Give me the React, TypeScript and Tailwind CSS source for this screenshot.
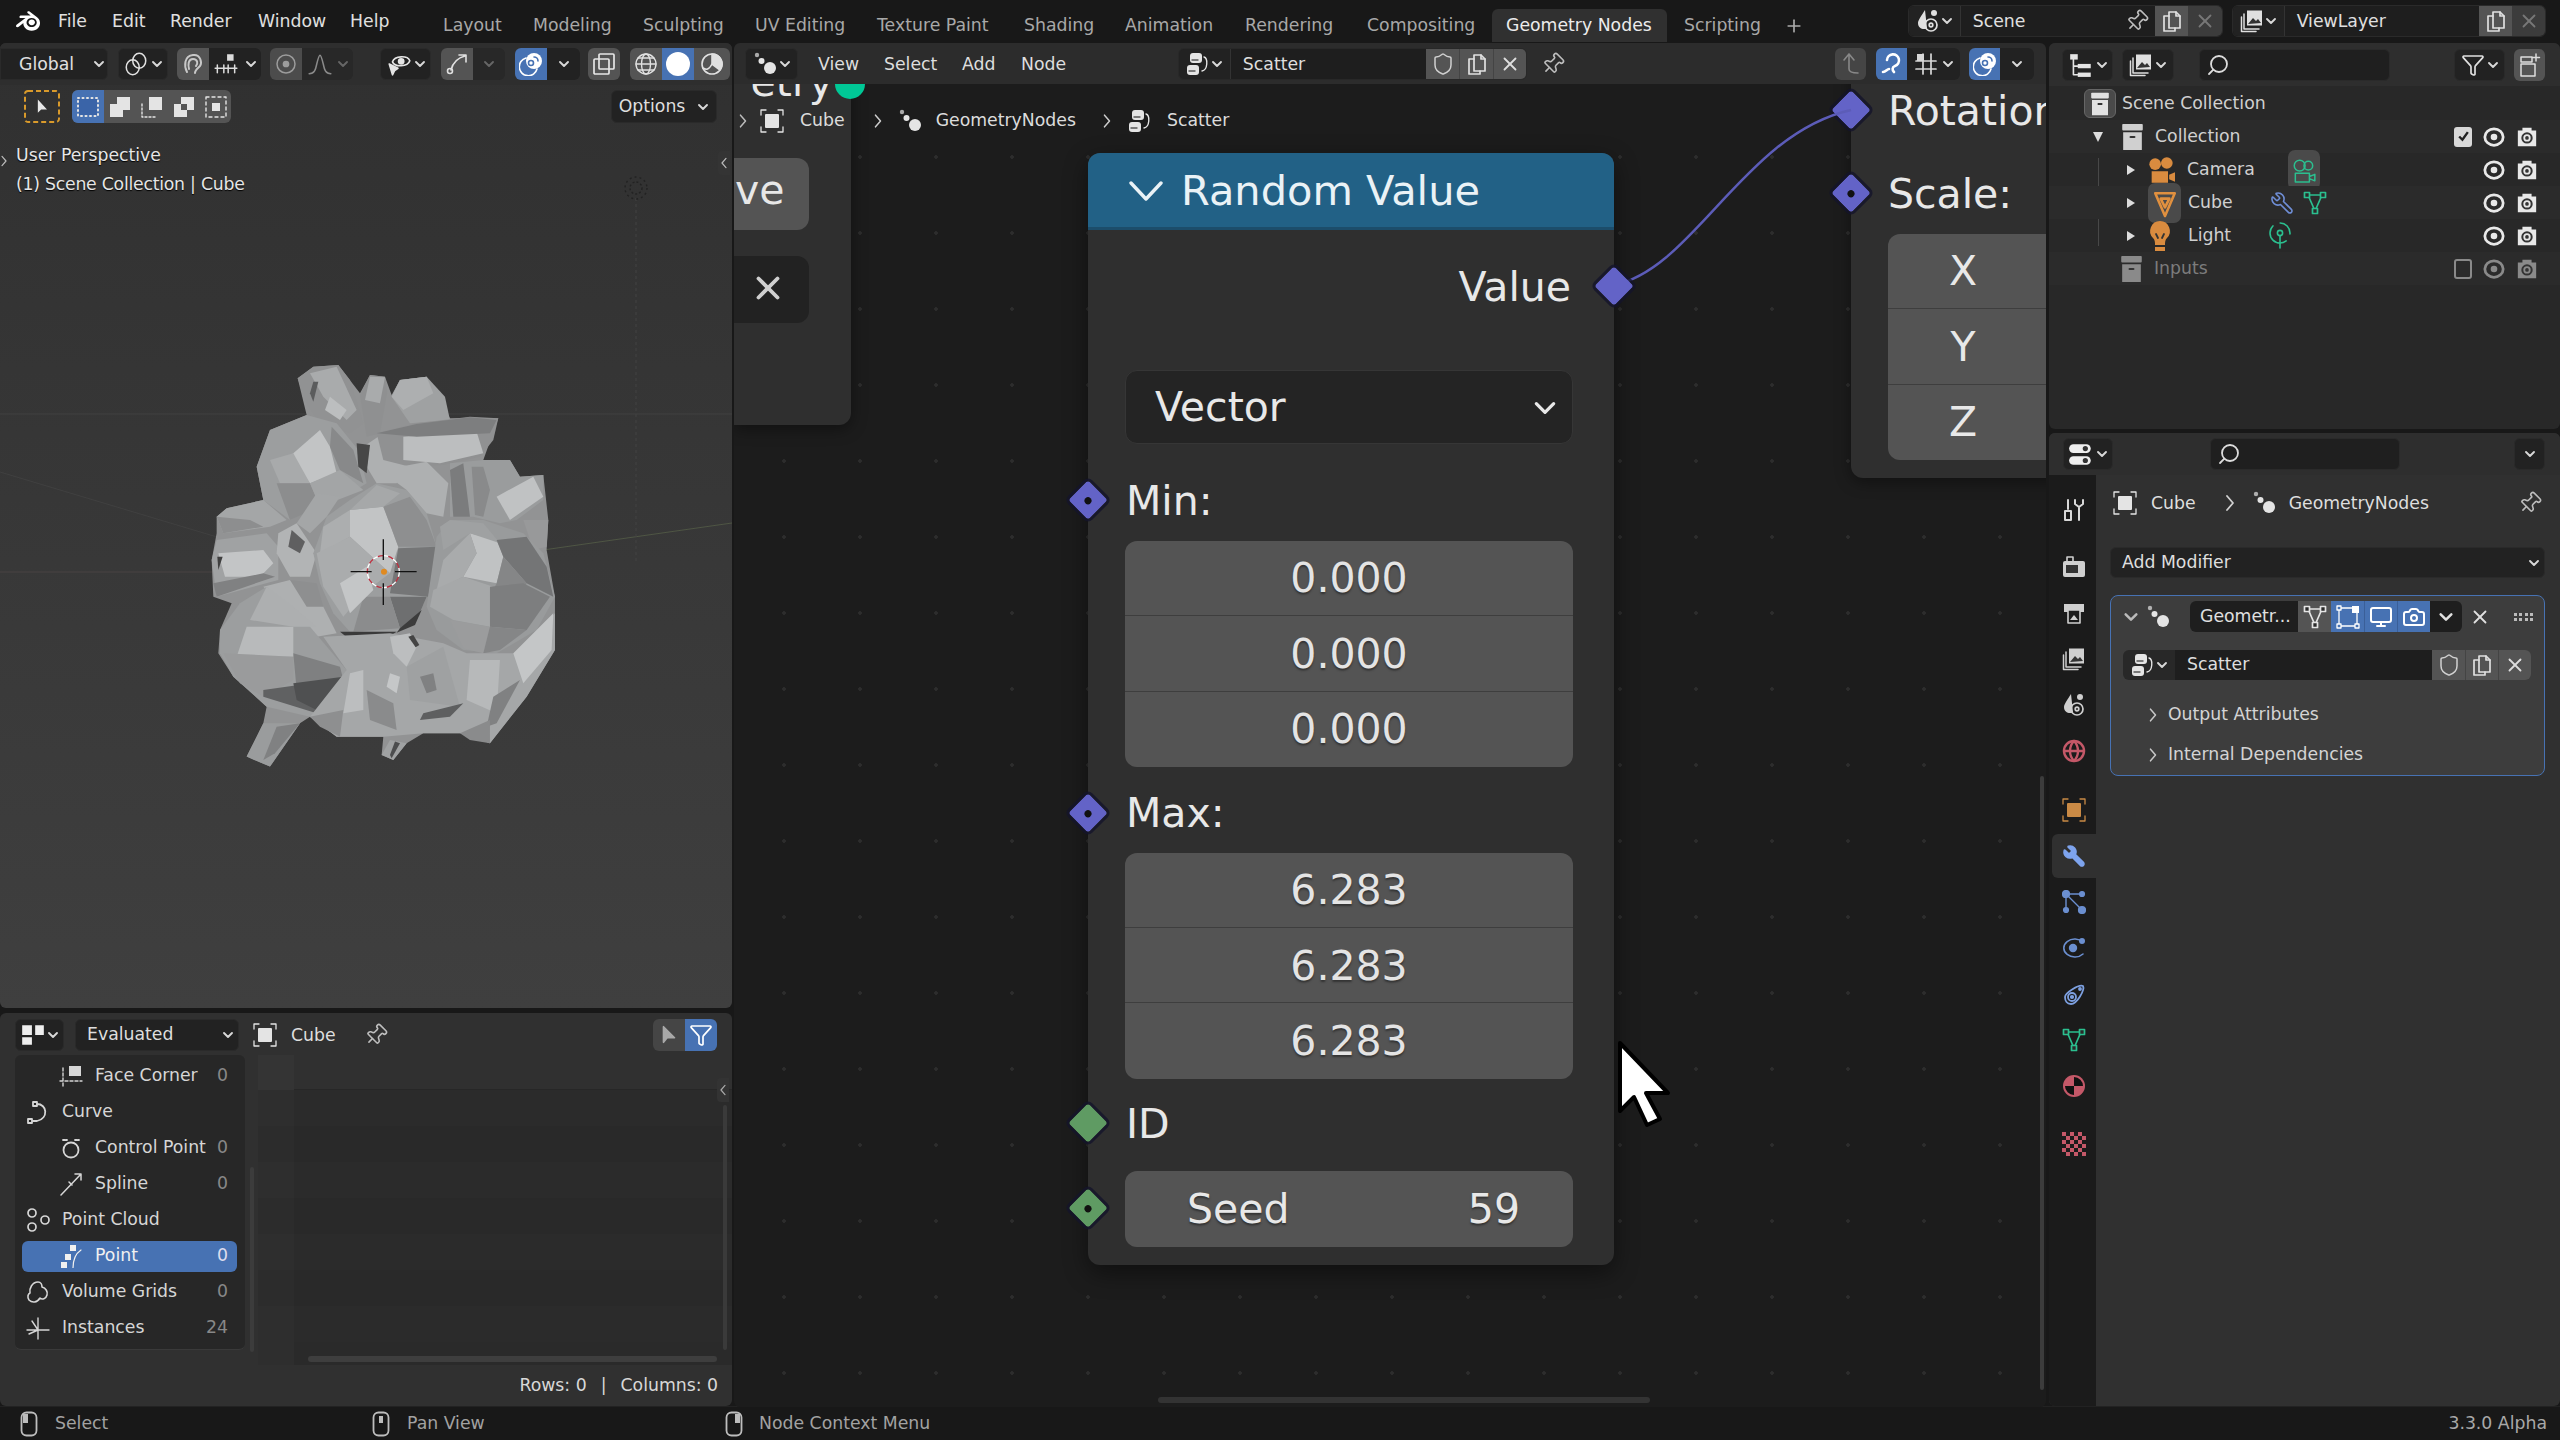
import React from 'react';
import { Pin, Shield, X, Search, Filter, Wrench, Monitor, Camera, Globe, Plus } from 'lucide-react';
import { SiBlender } from 'react-icons/si';

type P = { c?: string; children?: React.ReactNode; v?: string; sw?: number };
const S = ({ c = 'w-[24px] h-[24px]', children, v = '0 0 24 24', sw = 1.8 }: P) => (
  <svg viewBox={v} className={c + ' shrink-0'} fill="none" stroke="currentColor" strokeWidth={sw} strokeLinecap="round" strokeLinejoin="round">{children}</svg>
);
const Chev = ({ c = 'text-[#d8d8d8]' }: { c?: string }) => (
  <svg viewBox="0 0 12 12" className={'w-[12px] h-[12px] shrink-0 ' + c} fill="none" stroke="currentColor" strokeWidth={1.9} strokeLinecap="round" strokeLinejoin="round"><path d="M2 4l4 4 4-4" /></svg>
);
const RightChev = ({ c = 'w-[12px] h-[18px] text-[#c8c8c8]' }: { c?: string }) => (
  <svg viewBox="0 0 12 18" className={c + ' shrink-0'} fill="none" stroke="currentColor" strokeWidth={1.8} strokeLinecap="round" strokeLinejoin="round"><path d="M3 2l6 7-6 7" /></svg>
);
const NodesIc = ({ c = 'w-[24px] h-[24px] text-[#e4e4e4]' }: { c?: string }) => (
  <S c={c}><g fill="currentColor" stroke="none"><circle cx="4" cy="3" r="2.2" opacity=".7" /><circle cx="8.5" cy="9" r="3" /><circle cx="17" cy="16" r="6" /></g></S>
);
const CubeIc = ({ c = 'w-[24px] h-[24px] text-[#e4e4e4]', f = 'currentColor' }: { c?: string; f?: string }) => (
  <S c={c} sw={1.3}><rect x="5" y="5" width="14" height="14" rx="1" fill={f} stroke="none" /><path d="M1 6V1h5M18 1h5v5M23 18v5h-5M6 23H1v-5" /></S>
);
const TreeIc = ({ c = 'w-[24px] h-[24px] text-[#e4e4e4]' }: { c?: string }) => (
  <S c={c} sw={1.4}><rect x="4" y="1" width="12" height="10" rx="3" fill="currentColor" stroke="none" /><rect x="1" y="13" width="12" height="10" rx="3" fill="currentColor" stroke="none" /><path d="M18 5c4 1 4 13-2 14" /><path d="M6 8h6M3 19h6" stroke="#555" /></S>
);
const PinIc = ({ c = 'w-[24px] h-[24px] text-[#bdbdbd]' }: { c?: string }) => <Pin className={c + ' rotate-45 shrink-0'} strokeWidth={1.6} />;
const CopyIc = ({ c = 'w-[24px] h-[24px] text-[#e0e0e0]' }: { c?: string }) => (
  <S c={c} sw={1.7}><path d="M9 3h7l4 4v12H9z" /><path d="M16 3v4h4" /><path d="M9 7H4v15h11v-3" /></S>
);
const ShieldIc = ({ c = 'w-[24px] h-[24px] text-[#d0d0d0]' }: { c?: string }) => <Shield className={c + ' shrink-0'} strokeWidth={1.5} />;
const XIc = ({ c = 'w-[22px] h-[22px] text-[#dedede]' }: { c?: string }) => <X className={c + ' shrink-0'} strokeWidth={2} />;
const CollectionIc = ({ c = 'w-[24px] h-[30px] text-[#e2e2e2]' }: { c?: string }) => (
  <S c={c} v="0 0 24 30"><g fill="currentColor" stroke="none"><rect x="1" y="1" width="22" height="7" rx="1" /><path d="M2 10h20v19H2z" /></g><path d="M10 15h4" stroke="#333" strokeWidth="2.4" /></S>
);
const EyeIc = ({ c = 'text-[#e8e8e8]' }: { c?: string }) => (
  <svg viewBox="0 0 24 24" className={'w-[22px] h-[22px] shrink-0 ' + c}><ellipse cx="12" cy="12" rx="10" ry="9" fill="none" stroke="currentColor" strokeWidth="3" /><circle cx="12" cy="12" r="3.6" fill="currentColor" /></svg>
);
const CamIc = ({ c = 'text-[#e8e8e8]' }: { c?: string }) => (
  <svg viewBox="0 0 24 24" className={'w-[22px] h-[24px] shrink-0 ' + c}><path d="M7 2h10v3h5v17H2V5h5z" fill="currentColor" /><circle cx="12" cy="13" r="6.2" fill="#333" /><circle cx="12" cy="13" r="4" fill="currentColor" /><circle cx="12" cy="13" r="2" fill="#333" /></svg>
);
const MeshIc = ({ c = 'w-[24px] h-[24px] text-[#2bbf8f]' }: { c?: string }) => (
  <S c={c} sw={1.7}><path d="M5 4h14L12 20z" /><rect x="1.5" y="1.5" width="5" height="5" fill="#2a2a2a" /><rect x="17.5" y="1.5" width="5" height="5" fill="#2a2a2a" /><rect x="9.5" y="17.5" width="5" height="5" fill="#2a2a2a" /></S>
);
const ImgStack = ({ c = 'w-[24px] h-[24px] text-[#e0e0e0]' }: { c?: string }) => (
  <S c={c} sw={1.5}><rect x="7" y="1.5" width="15" height="15" fill="currentColor" stroke="none" /><path d="M8 15l5-6 3 3 2-2 3 4z" fill="#333" stroke="none" /><path d="M4 5v15h15M1.5 8v14.5H16" /></S>
);
const SceneIc = ({ c = 'w-[24px] h-[24px] text-[#e0e0e0]' }: { c?: string }) => (
  <S c={c} sw={1.7}><path d="M9 1C6 6 2 11 2 14c0 4 3 6 6 6 1 0 2 0 3-1L9 1z" fill="currentColor" stroke="none" /><circle cx="15" cy="16" r="6" /><circle cx="15" cy="16" r="1.8" /><circle cx="18" cy="4" r="3" fill="currentColor" stroke="none" /></S>
);
const Overlay = ({ c = 'w-[24px] h-[24px] text-white' }: { c?: string }) => (
  <S c={c} sw={1.6}><circle cx="15" cy="9" r="8" fill="currentColor" stroke="none" /><path d="M7 6a9 9 0 1 0 11 11" /><circle cx="12" cy="11" r="2.5" stroke="#4772b3" /><path d="M15 5a4 4 0 0 1 4 4" stroke="#4772b3" /></S>
);
const Dark = ({ c = '', children }: { c?: string; children?: React.ReactNode }) => (
  <div className={'h-[32px] flex items-center justify-center bg-[#222222] border border-[#2a2a2a] rounded-[6px] ' + c}>{children}</div>
);

const FACES: [string, string][] = [
  ['443,175 490,140 565,135 630,220 660,165 705,170 725,225 750,180 830,170 900,295 1045,295 1000,420 1080,420 1110,470 1180,465 1195,600 1190,690 1215,830 1215,990 1130,1130 1020,1270 940,1240 820,1240 770,1270 730,1320 695,1305 700,1250 560,1250 480,1190 450,1210 360,1340 290,1310 340,1210 350,1160 250,1070 205,1000 210,930 245,850 190,830 185,720 200,640 200,590 230,565 340,540 320,440 360,330 470,285', '#929394'],
  ['443,175 490,140 565,135 600,180 640,310 600,340 510,310 470,250', '#919293'],
  ['480,160 560,140 620,270 590,300 520,230', '#a9abac'],
  ['490,185 505,185 490,245 480,220', '#5b5c5d'],
  ['540,230 590,270 570,300 525,270', '#bcbebf'],
  ['630,225 660,165 705,170 712,215 690,340 650,350', '#8f9091'],
  ['660,170 705,172 690,250 645,240', '#a9abac'],
  ['725,230 750,180 830,170 885,230 900,300 780,310', '#9fa1a2'],
  ['725,230 750,180 830,170 850,220 760,270', '#adafb0'],
  ['640,380 700,340 780,440 740,490 680,490 650,440', '#aeb0b1'],
  ['680,340 800,310 960,290 1045,295 1030,360 990,410 880,435 780,440 700,420', '#909192'],
  ['760,350 980,335 1000,400 870,430 760,420', '#bcbebf'],
  ['680,340 800,312 960,292 1040,300 1020,340 800,350', '#7d7e7f'],
  ['320,440 360,330 470,285 560,310 625,390 650,490 600,520 500,560 420,600 340,540', '#9c9e9f'],
  ['430,400 510,330 540,380 560,460 480,490 420,410', '#c2c4c5'],
  ['360,420 430,400 480,490 390,490', '#a8aaab'],
  ['380,490 480,490 510,560 420,600', '#8c8d8e'],
  ['480,490 570,450 640,510 510,560', '#a3a5a6'],
  ['545,320 610,390 640,490 570,450 540,380', '#88898a'],
  ['620,370 660,375 650,460 625,440', '#474747'],
  ['200,590 230,565 340,540 410,600 360,620 220,640', '#a4a6a7'],
  ['200,590 300,600 340,620 220,640', '#8d8e8f'],
  ['185,720 200,660 350,640 385,680 385,780 200,830', '#a0a2a3'],
  ['205,700 340,690 370,730 330,770 225,770', '#c3c5c6'],
  ['190,790 340,760 375,770 200,830', '#808182'],
  ['202,710 218,710 205,750', '#3f3f3f'],
  ['385,640 440,610 500,700 480,770 420,770 380,700', '#b2b4b5'],
  ['340,800 420,780 520,860 560,940 500,950 420,880', '#aeb0b1'],
  ['420,780 500,790 520,860 470,860', '#8e8f90'],
  ['425,630 465,665 450,700 415,680', '#5f5f60'],
  ['500,520 570,530 530,590 480,640 440,610', '#a4a6a7'],
  ['490,700 530,590 600,540 680,490 770,510 830,580 860,680 830,830 800,900 740,935 600,935 550,880 510,790', '#9c9e9f'],
  ['600,570 700,560 745,680 720,760 600,650', '#c2c4c5'],
  ['520,620 600,570 600,650 510,700', '#acaeaf'],
  ['700,560 780,530 830,600 860,680 745,680', '#8e8f90'],
  ['600,570 680,495 750,520 700,560', '#a6a8a9'],
  ['745,685 860,680 835,830 720,820', '#757677'],
  ['720,830 830,830 800,900 750,925', '#6e6f70'],
  ['500,700 600,650 720,760 640,820 580,890 520,800', '#aaacad'],
  ['640,830 720,830 750,925 610,935', '#8b8c8d'],
  ['570,790 650,740 670,810 600,880', '#c4c6c7'],
  ['750,925 815,870 795,915 740,938', '#3c3c3c'],
  ['570,935 740,935 720,947 585,947', '#3a3a3a'],
  ['750,440 830,425 895,490 880,590 830,580 770,510 730,480', '#aeb0b1'],
  ['900,430 1000,420 1080,420 1110,470 1180,465 1180,540 1100,600 1050,610 970,590 900,590', '#9a9c9d'],
  ['900,450 940,430 960,590 910,590', '#7b7c7d'],
  ['1000,440 1020,510 1000,590 975,585 965,440', '#898a8b'],
  ['1040,530 1150,470 1180,530 1080,600', '#c0c2c3'],
  ['1120,600 1195,600 1190,680 1150,690', '#98999a'],
  ['830,860 860,650 900,600 1000,600 1120,640 1180,700 1215,830 1160,930 1040,1000 940,990 860,930', '#999b9c'],
  ['960,640 1040,660 1060,710 1040,790 940,770 980,700', '#c0c2c3'],
  ['880,720 960,640 980,700 940,770 860,810', '#a9abac'],
  ['870,620 900,600 1000,610 1050,670 960,640 880,690', '#9fa1a2'],
  ['1040,660 1130,650 1190,740 1210,830 1130,790 1060,710', '#747576'],
  ['1040,790 1060,710 1130,790 1110,860 1020,830', '#858687'],
  ['850,810 940,770 1030,800 1020,920 910,900 840,860', '#a6a8a9'],
  ['1020,800 1120,790 1200,830 1130,930 1020,920', '#7d7e7f'],
  ['900,900 1020,920 1000,1000 940,985', '#9b9c9d'],
  ['1020,920 1130,930 1050,990 1000,1000', '#858687'],
  ['210,930 270,850 350,800 480,920 590,1050 560,1150 480,1190 350,1160 250,1070 210,1000', '#9c9e9f'],
  ['290,920 430,920 430,1010 260,1010', '#b8babb'],
  ['220,1000 430,1010 430,1080 340,1130 270,1090', '#9a9b9c'],
  ['430,1000 570,1040 580,1080 440,1110', '#7f8081'],
  ['340,1110 590,1075 570,1120 500,1180 340,1130', '#606162'],
  ['430,1090 580,1070 500,1170 440,1140', '#4f5051'],
  ['350,800 430,860 500,920 430,920 300,900', '#adafb0'],
  ['520,950 720,940 880,970 950,1000 1100,1000 1215,880 1215,990 1130,1130 1020,1270 940,1240 820,1240 700,1250 560,1250 480,1190 590,1050', '#a5a7a8'],
  ['720,950 780,940 800,980 770,1040 730,1000', '#bcbebf'],
  ['775,950 790,945 808,975 797,982', '#444444'],
  ['770,1040 880,980 930,1160 780,1140', '#9fa1a2'],
  ['600,1060 640,1050 640,1170 580,1180', '#bcbebf'],
  ['960,1020 1050,1020 1040,1180 950,1140', '#b7b9ba'],
  ['1090,1000 1210,880 1205,990 1120,1090', '#c4c6c7'],
  ['1030,1130 1110,1080 1040,1210 1010,1220', '#808182'],
  ['650,1110 730,1150 740,1230 660,1200', '#8a8b8c'],
  ['820,1180 940,1150 900,1190 810,1200', '#5e5f60'],
  ['810,1070 850,1060 860,1110 830,1120', '#808182'],
  ['720,1060 750,1070 740,1120 710,1100', '#c5c7c8'],
  ['480,1190 580,1170 570,1250 510,1220', '#8e8f90'],
  ['930,1240 1020,1200 1020,1270 960,1260', '#8a8b8c'],
  ['340,1210 450,1210 360,1340 290,1310', '#9a9c9d'],
  ['380,1220 450,1210 375,1300 340,1320', '#808182'],
  ['720,1260 770,1270 730,1320 695,1305', '#a0a2a3'],
  ['735,1265 750,1270 725,1315 720,1305', '#4c4d4e'],
];

function Viewport() {
  return (
    <div className="relative h-[965px] mt-[1px] rounded-[6px] overflow-hidden bg-linear-to-b from-[#303030] to-[#3f3f3f]">
      <svg className="absolute left-0 top-0 w-[732px] h-[965px]" viewBox="0 0 732 965" fill="none">
        <path d="M0 371H732" stroke="#414141" />
        <path d="M0 429L217 494" stroke="#404040" />
        <path d="M0 529H220" stroke="#484242" />
        <path d="M543 507L732 480" stroke="#4f5644" />
        <path d="M636 155V520" stroke="#424242" strokeDasharray="3 3" />
        <g transform="translate(636,145)" stroke="#222" strokeWidth="1.4"><circle r="6" strokeDasharray="2 2" /><circle r="11" strokeDasharray="2 3" /></g>
        <g transform="translate(150,277) scale(0.3333)" stroke="none">
          {FACES.map((f, i) => <polygon key={i} points={f[0]} fill={f[1]} />)}
          <g fill="none" strokeWidth="4">
            <circle cx="700" cy="755" r="48" stroke="#fff" strokeDasharray="16 16" />
            <circle cx="700" cy="755" r="48" stroke="#c03040" strokeDasharray="16 16" strokeDashoffset="16" />
            <path d="M700 658V720M700 790V855M602 755H665M735 755H800" stroke="#111" />
          </g>
          <circle cx="702" cy="755" r="9" fill="#e08a20" />
        </g>
      </svg>
      <div className="relative flex items-center h-[42px] bg-[#2e2e2e]">
        <Dark c="w-[108px] !justify-start pl-[18px] gap-[19px] text-[#e0e0e0] !rounded-l-none"><span className="pt-[2px]">Global</span><Chev /></Dark>
        <Dark c="w-[50px] ml-[10px] gap-[2px] text-[#e0e0e0]"><S c="w-[26px] h-[26px]" sw={1.4}><ellipse cx="9" cy="15" rx="6" ry="7" /><ellipse cx="15" cy="9" rx="6" ry="7" /></S><Chev /></Dark>
        <div className="flex ml-[9px] w-[84px] h-[32px] rounded-[6px] overflow-hidden">
          <div className="w-[32px] bg-[#545454] flex items-center justify-center text-[#c8c8c8]"><S c="w-[24px] h-[24px]" sw={2}><path d="M6 20C3 14 3 4 12 3c8-1 9 8 7 11-2 2-5 4-5 7M8 17c-1-4-1-10 4-10 5 0 5 5 3 7" /></S></div>
          <div className="flex-1 bg-[#222] flex items-center justify-center gap-[6px] text-[#dcdcdc]"><S c="w-[26px] h-[26px]" sw={1.4}><path d="M2 16h20M4 13v7M10 13v7M14 13v7M20 13v7" /><rect x="13" y="3" width="6" height="6" fill="currentColor" stroke="none" /></S><Chev /></div>
        </div>
        <div className="flex ml-[9px] w-[83px] h-[32px] rounded-[6px] overflow-hidden">
          <div className="w-[32px] bg-[#4c4c4c] flex items-center justify-center text-[#9c9c9c]"><S c="w-[24px] h-[24px]" sw={1.5}><circle cx="12" cy="12" r="9" /><circle cx="12" cy="12" r="2.6" fill="currentColor" /></S></div>
          <div className="flex-1 bg-[#282828] flex items-center justify-center gap-[4px] text-[#8a8a8a]"><S c="w-[26px] h-[26px]" sw={1.4}><path d="M2 21c5 0 6-4 7-9 1-4 2-8 3-8s2 4 3 8c1 5 2 9 7 9" /></S><Chev c="text-[#666]" /></div>
        </div>
        <Dark c="w-[51px] ml-[27px] gap-[2px] text-[#e4e4e4]"><S c="w-[26px] h-[26px]" sw={1.5}><path d="M6 10c2-6 14-6 16-1-2 6-14 6-16 1z" /><circle cx="14" cy="9.5" r="2.4" fill="currentColor" /><path d="M3 12l8 4-3 2-2 4z" fill="currentColor" /></S><Chev /></Dark>
        <div className="flex ml-[10px] w-[64px] h-[32px] rounded-[6px] overflow-hidden">
          <div className="w-[32px] bg-[#545454] flex items-center justify-center text-[#e0e0e0]"><S c="w-[24px] h-[24px]" sw={1.6}><path d="M6 18C8 10 12 6 20 4M14 3h7v7" /><circle cx="5" cy="19" r="2.5" /></S></div>
          <div className="flex-1 bg-[#282828] flex items-center justify-center"><Chev c="text-[#666]" /></div>
        </div>
        <div className="flex ml-[10px] w-[65px] h-[32px] rounded-[6px] overflow-hidden">
          <div className="w-[32px] bg-[#4772b3] flex items-center justify-center"><Overlay /></div>
          <div className="flex-1 bg-[#222] flex items-center justify-center"><Chev /></div>
        </div>
        <div className="ml-[8px] w-[32px] h-[32px] rounded-[6px] bg-[#545454] flex items-center justify-center text-[#e6e6e6]"><S c="w-[24px] h-[24px]" sw={1.7}><rect x="7" y="2" width="15" height="15" rx="1" /><rect x="2" y="7" width="15" height="15" rx="1" /></S></div>
        <div className="flex ml-[10px] w-[100px] h-[32px] rounded-[6px] overflow-hidden">
          <div className="w-[32px] bg-[#545454] flex items-center justify-center text-[#e0e0e0]"><S c="w-[24px] h-[24px]" sw={1.4}><circle cx="12" cy="12" r="10" /><ellipse cx="12" cy="12" rx="4.5" ry="10" /><path d="M2 12h20M4 6h16M4 18h16" /></S></div>
          <div className="w-[32px] bg-[#4772b3] flex items-center justify-center"><div className="w-[24px] h-[24px] rounded-full bg-white" /></div>
          <div className="flex-1 bg-[#545454] flex items-center justify-center text-[#e0e0e0]"><S c="w-[24px] h-[24px]" sw={1.6}><circle cx="12" cy="12" r="10" /><path d="M12 2v10l8 6a10 10 0 0 0-8-16z" fill="currentColor" /><path d="M3 16c3 2 6 2 9-4" /></S></div>
        </div>
      </div>
      <div className="relative flex items-center h-[33px] mt-[5px]">
        <div className="ml-[24px] w-[36px] h-[33px] relative flex items-center justify-center text-[#e8e8e8]">
          <svg className="absolute inset-0 w-[36px] h-[33px]" viewBox="0 0 36 33" fill="none"><rect x="1" y="1" width="34" height="31" rx="3" stroke="#d99a2b" strokeWidth="2" strokeDasharray="5 3" /></svg>
          <S c="w-[20px] h-[22px]"><path d="M7 3v16l4-4h7z" fill="currentColor" stroke="none" /></S>
        </div>
        <div className="ml-[12px] flex w-[159px] h-[33px] rounded-[6px] overflow-hidden bg-[#545454] text-[#e4e4e4]">
          <div className="w-[32px] bg-[#4772b3] flex items-center justify-center"><S c="w-[24px] h-[24px]" sw={2}><rect x="3" y="4" width="18" height="16" fill="#3a64a8" stroke="none" /><rect x="2" y="3" width="20" height="18" strokeDasharray="1 3.5" /></S></div>
          <div className="w-[32px] flex items-center justify-center"><S c="w-[24px] h-[24px]"><path d="M9 2h13v13h-7v7H2V9h7z" fill="currentColor" stroke="none" /></S></div>
          <div className="w-[32px] flex items-center justify-center"><S c="w-[24px] h-[24px]" sw={1.4}><path d="M9 2h13v13H9z" fill="currentColor" stroke="none" /><path d="M2 9v13h13" strokeDasharray="2 2" /></S></div>
          <div className="w-[32px] flex items-center justify-center"><S c="w-[24px] h-[24px]" sw={1.6}><path d="M9 2h13v13h-7V9H9zM2 9h7v6h6v7H2z" fill="currentColor" stroke="none" /></S></div>
          <div className="w-[31px] flex items-center justify-center"><S c="w-[24px] h-[24px]" sw={1.4}><rect x="2" y="2" width="20" height="20" strokeDasharray="3 3" /><rect x="8" y="8" width="8" height="8" fill="currentColor" stroke="none" /></S></div>
        </div>
        <Dark c="w-[106px] h-[33px] absolute left-[611px] top-0 gap-[12px] text-[#dedede]"><span>Options</span><Chev /></Dark>
      </div>
      <div className="relative mt-[18px] pl-[16px] text-[#e6e6e6] leading-[29px] [text-shadow:0_1px_1px_#000]">
        <div>User Perspective</div>
        <div className="tracking-[-0.24px]">(1) Scene Collection | Cube</div>
      </div>
      <div className="absolute left-0 top-[106px] w-[12px] h-[24px] flex items-center text-[#aaa]"><RightChev c="w-[8px] h-[14px] text-[#bbb]" /></div>
      <div className="absolute left-[718px] top-[108px] w-[12px] h-[24px] rounded-l bg-[#343434] flex items-center justify-center"><RightChev c="w-[8px] h-[14px] text-[#bbb] rotate-180" /></div>
    </div>
  );
}

const SpreadRow = ({ ic, label, n, ind, sel }: { ic: React.ReactNode; label: string; n?: string; ind?: boolean; sel?: boolean }) => (
  <div className="h-[36px] flex items-center pl-[7px]">
    <div className={'w-[215px] h-[31px] rounded-[6px] flex items-center pr-[9px] ' + (ind ? 'pl-[36px] ' : 'pl-[3px] ') + (sel ? 'bg-[#4772b3] text-[#f0f0f0]' : 'text-[#d6d6d6]')}>
      <span className="w-[25px] h-[25px] flex items-center justify-center shrink-0">{ic}</span>
      <span className="ml-[12px]">{label}</span>
      {n && <span className={'ml-auto ' + (sel ? 'text-[#dde]' : 'text-[#888]')}>{n}</span>}
    </div>
  </div>
);

function Spreadsheet() {
  const rows = [0, 1, 2, 3, 4, 5, 6, 7];
  return (
    <div className="h-[393px] mt-[5px] rounded-[6px] bg-[#303030] overflow-hidden flex flex-col">
      <div className="h-[39px] pt-[6px] flex items-start relative shrink-0">
        <Dark c="w-[49px] h-[31px] ml-[15px] gap-[1px] text-[#eee]"><S c="w-[26px] h-[26px]" sw={1.5}><path d="M2 3h9v9H2zM2 14h9v7H2zM14 3h8v9h-8z" fill="currentColor" stroke="none" /></S><Chev /></Dark>
        <Dark c="w-[164px] h-[31px] ml-[11px] !justify-start pl-[11px] text-[#dedede]"><span>Evaluated</span><span className="ml-auto pr-[4px]"><Chev /></span></Dark>
        <span className="ml-[14px] mt-[4px]"><CubeIc /></span>
        <span className="ml-[14px] mt-[4px] text-[#dedede]">Cube</span>
        <span className="ml-[28px] mt-[4px]"><PinIc /></span>
        <div className="absolute left-[653px] top-[6px] flex h-[32px] rounded-[6px] overflow-hidden">
          <div className="w-[32px] bg-[#454545] flex items-center justify-center text-[#a8a8a8]"><S c="w-[22px] h-[22px]"><path d="M6 3v17l4-5h8z" fill="currentColor" /></S></div>
          <div className="w-[32px] bg-[#4772b3] flex items-center justify-center text-white"><Filter className="w-[24px] h-[24px]" strokeWidth={1.7} /></div>
        </div>
      </div>
      <div className="flex h-[310px] mt-[3px] relative shrink-0">
        <div className="ml-[15px] w-[230px] h-[295px] bg-[#272727] rounded-[6px] border-b border-[#3a3a3a] overflow-hidden pt-[3px] text-[#d6d6d6]">
          <SpreadRow ind label="Face Corner" n="0" ic={<S sw={1.4}><rect x="10" y="2" width="12" height="10" fill="currentColor" stroke="none" /><path d="M4 4v18M1 17h22" strokeDasharray="3 2" /></S>} />
          <SpreadRow label="Curve" ic={<S sw={1.8}><rect x="7" y="2" width="4" height="4" /><path d="M11 4c10 0 12 14 0 17H7" /><rect x="2" y="19" width="4" height="4" /></S>} />
          <SpreadRow ind label="Control Point" n="0" ic={<S sw={1.8}><circle cx="12" cy="14" r="7.5" /><path d="M4 4h4M16 4h4" strokeDasharray="2 1" /></S>} />
          <SpreadRow ind label="Spline" n="0" ic={<S sw={1.5}><path d="M2 23L22 2M16 2h6v6M10 10l3 3" /></S>} />
          <SpreadRow label="Point Cloud" ic={<S sw={1.7}><circle cx="6" cy="5" r="4" /><circle cx="6" cy="19" r="4" /><circle cx="19" cy="12" r="4" /></S>} />
          <SpreadRow ind sel label="Point" n="0" ic={<S sw={1.2}><rect x="11" y="1" width="6" height="6" fill="currentColor" stroke="none" /><rect x="6" y="10" width="6" height="6" fill="currentColor" stroke="none" /><rect x="2" y="18" width="6" height="6" fill="currentColor" stroke="none" /><path d="M22 6c-6 4-8 10-8 18" /></S>} />
          <SpreadRow label="Volume Grids" n="0" ic={<S sw={1.6}><path d="M12 2c3 0 4 3 4 5 4 1 6 5 5 8-1 4-5 5-7 3-3 5-8 5-11 2-2-3-1-6 1-7-1-4 2-11 8-11z" /></S>} />
          <SpreadRow label="Instances" n="24" ic={<S sw={1.4}><path d="M1 14h22M12 2v21M12 14l-6-9M12 14l-9 4" /></S>} />
        </div>
        <div className="ml-[5px] mt-[112px] w-[4px] h-[185px] rounded bg-[#3c3c3c]" />
        <div className="ml-[4px] flex-1 relative">
          {rows.map((r) => (
            <div key={r} className={'flex ' + (r === 0 ? 'h-[35px]' : 'h-[36px]')}>
              <div className={'w-[36px] ' + (r === 0 ? 'bg-[#343434]' : r % 2 ? 'bg-[#2e2e2e]' : 'bg-[#2c2c2c]')} />
              <div className={'flex-1 ' + (r === 0 ? 'bg-[#303030] border-b border-[#272727]' : r % 2 ? 'bg-[#2b2b2b]' : 'bg-[#292929]')} />
            </div>
          ))}
          <div className="h-[23px] flex"><div className="w-[36px] bg-[#2e2e2e]" /><div className="flex-1 bg-[#2a2a2a]" /></div>
          <div className="absolute left-[50px] top-[301px] w-[409px] h-[6px] rounded bg-[#3e3e3e]" />
          <div className="absolute left-[465px] top-[50px] w-[4px] h-[245px] rounded bg-[#3a3a3a]" />
          <div className="absolute left-[459px] top-[23px] w-[12px] h-[24px] rounded-l bg-[#333] flex items-center justify-center"><RightChev c="w-[8px] h-[14px] text-[#aaa] rotate-180" /></div>
        </div>
      </div>
      <div className="flex-1 flex items-center justify-end pr-[14px] gap-[14px] text-[#d8d8d8] pt-[1px]">
        <span>Rows: 0</span><span>|</span><span>Columns: 0</span>
      </div>
    </div>
  );
}

const Socket = ({ dot, c = 'bg-[#6363c7]' }: { dot?: boolean; c?: string }) => (
  <div className={'w-[28px] h-[28px] rotate-45 rounded-[3px] flex items-center justify-center outline-[3px] outline-[#14142a]/80 ' + c}>
    {dot && <div className="w-[7px] h-[7px] rounded-full bg-[#111]" />}
  </div>
);
const Field = ({ t }: { t: string }) => (
  <div className="h-[75.3px] pt-[2px] bg-[#545454] flex items-center justify-center text-[#e4e4e4] [text-shadow:0_2px_2px_#333] border-b border-[#3e3e3e] last:border-b-0">{t}</div>
);

function NodeEditor() {
  return (
    <div className="w-[1312px] ml-[2px] mt-[1px] h-[1364px] rounded-[6px] overflow-hidden flex flex-col bg-[#1c1c1c] relative">
      <div className="h-[41px] bg-[#2c2c2c] flex items-center text-[#dedede] shrink-0 relative z-10">
        <Dark c="ml-[11px] w-[53px] gap-[2px]"><NodesIc /><Chev /></Dark>
        <span className="ml-[20px] w-[66px] pt-[2px]">View</span>
        <span className="w-[78px] pt-[2px]">Select</span>
        <span className="w-[59px] pt-[2px]">Add</span>
        <span className="w-[157px] pt-[2px]">Node</span>
        <div className="flex w-[349px] h-[32px] rounded-[6px] overflow-hidden border border-[#282828]">
          <div className="w-[51px] bg-[#222] flex items-center justify-center gap-[1px]"><TreeIc /><Chev /></div>
          <div className="w-[197px] bg-[#1e1e1e] flex items-center pl-[12px] pt-[2px] border-l border-[#333]">Scatter</div>
          <div className="w-[33px] bg-[#545454] flex items-center justify-center"><ShieldIc /></div>
          <div className="w-[34px] bg-[#545454] border-l border-[#444] flex items-center justify-center"><CopyIc /></div>
          <div className="w-[33px] bg-[#545454] border-l border-[#444] flex items-center justify-center"><XIc /></div>
        </div>
        <span className="ml-[14px]"><PinIc /></span>
        <div className="absolute left-[1101px] top-[5px] flex">
          <div className="w-[31px] h-[32px] rounded-[6px] bg-[#454545] flex items-center justify-center text-[#888]"><S c="w-[24px] h-[26px]" sw={1.6}><path d="M5 8l5-6 5 6M10 2v15c0 3 3 4 9 4" /></S></div>
          <div className="ml-[10px] flex w-[84px] h-[32px] rounded-[6px] overflow-hidden">
            <div className="w-[31px] bg-[#4772b3] flex items-center justify-center text-white"><S c="w-[24px] h-[24px]" sw={2.6}><path d="M7 8a6 6 0 1 1 8 6c-3 1-3 4-1 6M3 20c3 0 4-3 6-3" /></S></div>
            <div className="flex-1 bg-[#222] flex items-center justify-center gap-[4px] text-[#d8d8d8]"><S c="w-[24px] h-[24px]" sw={1.7}><path d="M2 9h20M2 17h20M9 2v20M17 2v20" /><rect x="3" y="2" width="7" height="7" fill="currentColor" stroke="none" /></S><Chev /></div>
          </div>
          <div className="ml-[9px] flex w-[65px] h-[32px] rounded-[6px] overflow-hidden">
            <div className="w-[31px] bg-[#4772b3] flex items-center justify-center"><Overlay /></div>
            <div className="flex-1 bg-[#222] flex items-center justify-center"><Chev /></div>
          </div>
        </div>
      </div>
      <div className="flex-1 relative overflow-hidden bg-[#1c1c1c] bg-[radial-gradient(circle,#2d2d2d_1.5px,transparent_2px)] [background-size:76px_76px] [background-position:12px_35px] text-[41px] text-[#e8e8e8]">
        {/* left partial node */}
        <div className="absolute left-0 top-[-100px] w-[117px] h-[441px] bg-[#2f2f2f] rounded-br-[12px] shadow-[0_4px_16px_rgba(0,0,0,.4)]">
          <div className="absolute right-[18px] top-[74px] leading-[48px]">etry</div>
          <div className="absolute left-0 top-[174px] w-[75px] h-[72px] bg-[#545454] rounded-r-[12px] flex items-center pl-[1px] pb-[6px]">ve</div>
          <div className="absolute left-0 top-[272px] w-[75px] h-[67px] bg-[#222] rounded-r-[12px] flex items-center justify-end pr-[22px] pb-[4px]"><X className="w-[38px] h-[38px] text-[#d0d0d0]" strokeWidth={2.4} /></div>
          <div className="absolute left-[101px] top-[85px] w-[30px] h-[30px] rounded-full bg-[#00c896]" />
        </div>
        <div className="absolute left-[4px] top-[25px] flex items-center text-[17.3px] text-[#dcdcdc] leading-none">
          <RightChev c="w-[10px] h-[16px] text-[#bbb]" />
          <span className="ml-[12px]"><CubeIc /></span><span className="ml-[16px]">Cube</span>
          <RightChev c="ml-[28px] w-[10px] h-[18px] text-[#ccc]" />
          <span className="ml-[15px]"><NodesIc /></span><span className="ml-[14px]">GeometryNodes</span>
          <RightChev c="ml-[26px] w-[10px] h-[18px] text-[#ccc]" />
          <span className="ml-[16px]"><TreeIc /></span><span className="ml-[15px]">Scatter</span>
        </div>
        {/* right partial node */}
        <div className="absolute left-[1117px] top-[-100px] w-[400px] h-[494px] bg-[#2f2f2f] rounded-bl-[12px] pl-[37px] flex flex-col shadow-[0_4px_16px_rgba(0,0,0,.4)]">
          <div className="relative h-[76px] mt-[88px] pt-[4px] flex items-center whitespace-nowrap">
            <div className="absolute left-[-51px] top-[24px]"><Socket /></div>Rotation:
          </div>
          <div className="relative h-[76px] mt-[7px] pt-[4px] flex items-center">
            <div className="absolute left-[-51px] top-[24px]"><Socket dot /></div>Scale:
          </div>
          <div className="mt-[3px] w-[363px] rounded-[12px] overflow-hidden">
            {['X', 'Y', 'Z'].map((t) => (
              <div key={t} className="h-[75.3px] pt-[2px] bg-[#545454] flex items-center border-b border-[#3e3e3e] last:border-b-0"><span className="w-[150px] text-center">{t}</span></div>
            ))}
          </div>
        </div>
        {/* link */}
        <svg className="absolute left-0 top-0 w-[1312px] h-[400px]" viewBox="0 0 1312 400" fill="none">
          <path d="M880 201C960 185 1010 50 1117 26" stroke="#5c5cb8" strokeWidth="2.4" />
        </svg>
        {/* main node */}
        <div className="absolute left-[354px] top-[69px] w-[526px] rounded-[12px] bg-[#2f2f2f] shadow-[0_8px_24px_rgba(0,0,0,.45)] flex flex-col">
          <div className="h-[77px] rounded-t-[12px] bg-[#226186] border-b-[3px] border-[#1c4d6b] flex items-center pl-[41px] text-[#eaf2f6] pt-[2px]">
            <svg viewBox="0 0 34 20" className="w-[34px] h-[20px]" fill="none" stroke="currentColor" strokeWidth="3.4" strokeLinecap="round" strokeLinejoin="round"><path d="M2 2l15 16L32 2" /></svg>
            <span className="ml-[18px] text-[41.5px]">Random Value</span>
          </div>
          <div className="relative h-[76px] mt-[18px] pt-[3px] flex items-center justify-end pr-[43px]">
            Value
            <div className="absolute right-[-14px] top-[24px]"><Socket /></div>
          </div>
          <div className="h-[74px] mt-[46px] ml-[37px] mr-[41px] rounded-[12px] bg-[#242424] border border-[#363636] flex items-center pt-[2px] pl-[29px] pr-[14px]">
            Vector
            <svg viewBox="0 0 24 24" className="ml-auto w-[26px] h-[26px]" fill="none" stroke="currentColor" strokeWidth="3" strokeLinecap="round" strokeLinejoin="round"><path d="M4 8l8 8 8-8" /></svg>
          </div>
          <div className="relative h-[76px] mt-[18px] pt-[4px] flex items-center pl-[38px]">
            Min:<div className="absolute left-[-14px] top-[24px]"><Socket dot /></div>
          </div>
          <div className="mt-[3px] ml-[37px] mr-[41px] rounded-[12px] overflow-hidden"><Field t="0.000" /><Field t="0.000" /><Field t="0.000" /></div>
          <div className="relative h-[76px] mt-[8px] pt-[2px] flex items-center pl-[38px]">
            Max:<div className="absolute left-[-14px] top-[24px]"><Socket dot /></div>
          </div>
          <div className="mt-[2px] ml-[37px] mr-[41px] rounded-[12px] overflow-hidden"><Field t="6.283" /><Field t="6.283" /><Field t="6.283" /></div>
          <div className="relative h-[76px] mt-[6px] pt-[4px] flex items-center pl-[38px]">
            ID<div className="absolute left-[-14px] top-[24px]"><Socket c="bg-[#5f9b63]" /></div>
          </div>
          <div className="relative h-[76px] mt-[10px] mb-[18px] ml-[37px] mr-[41px] rounded-[12px] bg-[#545454] flex items-center justify-between pt-[2px] pl-[62px] pr-[53px] [text-shadow:0_2px_2px_#333]">
            <span>Seed</span><span>59</span>
            <div className="absolute left-[-51px] top-[23px]"><Socket dot c="bg-[#5f9b63]" /></div>
          </div>
        </div>
        <div className="absolute left-[1306px] top-[692px] w-[4px] h-[614px] rounded bg-[#3c3c3c]" />
        <div className="absolute left-[424px] top-[1313px] w-[492px] h-[6px] rounded bg-[#333]" />
        {/* mouse pointer */}
        <svg className="absolute left-[880px] top-[955px] w-[60px] h-[90px]" viewBox="0 0 60 90"><path d="M6 4L54 54H32L46 80L33 86L20 58L6 72Z" fill="#fff" stroke="#000" strokeWidth="4" strokeLinejoin="round" /></svg>
      </div>
    </div>
  );
}

const OutRow = ({ c = '', children, right }: { c?: string; children?: React.ReactNode; right?: React.ReactNode }) => (
  <div className={'h-[33px] flex items-center relative ' + c}>
    {children}
    <div className="ml-auto flex items-center pr-[22px]">{right}</div>
  </div>
);
const Tri = () => <svg viewBox="0 0 10 12" className="w-[10px] h-[12px] shrink-0 text-[#ddd]"><path d="M1 1l8 5-8 5z" fill="currentColor" /></svg>;
const EyeCam = ({ dim }: { dim?: boolean }) => (
  <>
    <EyeIc c={dim ? 'text-[#8a8a8a] ml-[11px]' : 'text-[#e8e8e8] ml-[11px]'} />
    <span className="ml-[11px]"><CamIc c={dim ? 'text-[#8a8a8a]' : 'text-[#e8e8e8]'} /></span>
  </>
);

function Outliner() {
  return (
    <div className="h-[386px] mt-[1px] rounded-[6px] overflow-hidden bg-[#282828] flex flex-col">
      <div className="h-[43px] bg-[#2e2e2e] flex items-center relative shrink-0">
        <Dark c="ml-[13px] w-[51px] gap-[2px] text-[#e4e4e4]"><S c="w-[26px] h-[26px]" sw={1.5}><rect x="2" y="2" width="7" height="5" fill="currentColor" stroke="none" /><rect x="9" y="11" width="12" height="4" fill="currentColor" stroke="none" /><rect x="9" y="19" width="12" height="4" fill="currentColor" stroke="none" /><path d="M5 7v14h4M5 13h4" /></S><Chev /></Dark>
        <Dark c="ml-[9px] w-[52px] gap-[2px]"><ImgStack /><Chev /></Dark>
        <Dark c="ml-[25px] w-[191px] !justify-start pl-[6px] !bg-[#1f1f1f] text-[#dcdcdc]"><Search className="w-[24px] h-[24px] -scale-x-100" strokeWidth={1.8} /></Dark>
        <Dark c="ml-[64px] w-[51px] gap-[2px] text-[#e0e0e0]"><Filter className="w-[24px] h-[24px]" strokeWidth={1.7} /><Chev /></Dark>
        <div className="ml-[9px] w-[31px] h-[32px] rounded-[6px] bg-[#545454] flex items-center justify-center text-[#ddd]"><S c="w-[24px] h-[26px]" sw={1.5}><rect x="3" y="4" width="11" height="5" /><rect x="3" y="11" width="14" height="12" /><path d="M18 1v7M14.5 4.5h7" /></S></div>
      </div>
      <div className="text-[#d0d0d0] text-[17.3px] mt-[1px]">
        <OutRow c="pl-[35px]">
          <div className="w-[32px] h-[29px] rounded-[6px] bg-[#4a4a4a] border border-[#666] flex items-center justify-center"><CollectionIc c="w-[20px] h-[24px] text-[#e2e2e2]" /></div>
          <span className="ml-[6px]">Scene Collection</span>
        </OutRow>
        <OutRow c="pl-[44px] bg-[#2b2b2b]" right={
          <><div className="w-[18px] h-[20px] rounded-[3px] bg-[#d8d8d8] flex items-center justify-center"><svg viewBox="0 0 12 12" className="w-[13px] h-[13px]" fill="none" stroke="#222" strokeWidth="2.2"><path d="M2 6l3 3 5-7" /></svg></div><EyeCam /></>
        }>
          <svg viewBox="0 0 10 12" className="w-[10px] h-[12px] text-[#ddd]"><path d="M0 1h10L5 11z" fill="currentColor" /></svg>
          <span className="ml-[18px]"><CollectionIc c="w-[23px] h-[28px]" /></span>
          <span className="ml-[11px]">Collection</span>
        </OutRow>
        <div className="relative">
          <div className="absolute left-[49px] top-[5px] w-[1px] h-[88px] bg-[#484848]" />
          <OutRow c="pl-[77px]" right={<EyeCam />}>
            <Tri />
            <span className="ml-[11px] w-[28px] h-[28px] text-[#d98b3f]"><S c="w-[28px] h-[28px]"><g fill="currentColor" stroke="none"><circle cx="7" cy="7" r="5" /><circle cx="17" cy="6" r="5" /><path d="M4 13h14v10H4zM19 16l5-2v8l-5-2z" /></g></S></span>
            <span className="ml-[12px]">Camera</span>
            <div className="ml-[33px] w-[32px] h-[40px] rounded-[7px] bg-[#4a4a4a] flex items-center justify-center text-[#2bbf8f]"><S c="w-[26px] h-[30px]" sw={1.4}><circle cx="8" cy="8" r="5" /><circle cx="16" cy="8" r="4" /><path d="M4 15h13v8H4zM17 18l5-2v6l-5-2z" /></S></div>
          </OutRow>
          <OutRow c="pl-[77px] bg-[#2b2b2b]" right={<EyeCam />}>
            <Tri />
            <div className="ml-[12px] w-[33px] h-[40px] rounded-[7px] bg-[#4a4a4a] flex items-center justify-center text-[#e0903f]"><S c="w-[26px] h-[30px]" sw={2.4}><path d="M3 3h18L12 24zM8 8h8l-4 8z" /></S></div>
            <span className="ml-[7px]">Cube</span>
            <span className="ml-[37px] text-[#6f8ed6]"><Wrench className="w-[24px] h-[26px] -scale-x-100" strokeWidth={1.6} /></span>
            <span className="ml-[9px]"><MeshIc c="w-[24px] h-[30px] text-[#2bbf8f]" /></span>
          </OutRow>
          <OutRow c="pl-[77px]" right={<EyeCam />}>
            <Tri />
            <span className="ml-[12px] text-[#d98b3f]"><S c="w-[24px] h-[32px]" v="0 0 24 32"><path d="M12 1a10 10 0 0 0-7 17c2 2 2 4 2 7h10c0-3 0-5 2-7A10 10 0 0 0 12 1z" fill="currentColor" stroke="none" /><path d="M7 27h10v4H7z" fill="currentColor" stroke="none" /><path d="M8 14l2 4M16 14l-2 4" stroke="#333" /></S></span>
            <span className="ml-[16px]">Light</span>
            <span className="ml-[37px] text-[#2bbf8f]"><S c="w-[24px] h-[32px]" v="0 0 24 32" sw={1.6}><circle cx="12" cy="13" r="10" strokeDasharray="30 8" strokeDashoffset="-9" /><circle cx="12" cy="13" r="2.6" /><path d="M12 16v12" /></S></span>
          </OutRow>
        </div>
        <OutRow c="pl-[71px] bg-[#2b2b2b] text-[#7c7c7c]" right={
          <><div className="w-[18px] h-[20px] rounded-[3px] border-2 border-[#8a8a8a]" /><EyeCam dim /></>
        }>
          <CollectionIc c="w-[23px] h-[28px] text-[#8a8a8a]" />
          <span className="ml-[11px]">Inputs</span>
        </OutRow>
      </div>
    </div>
  );
}

const Tab = ({ children, active, c = '' }: { children?: React.ReactNode; active?: boolean; c?: string }) => (
  <div className={'h-[46px] flex items-center justify-center pl-[2px] ' + c}>
    {active
      ? <div className="w-[44px] h-[44px] rounded-l-[6px] bg-[#303030] flex items-center justify-center">{children}</div>
      : children}
  </div>
);

function Properties() {
  return (
    <div className="h-[973px] mt-[4px] rounded-[6px] overflow-hidden bg-[#303030] flex flex-col text-[17.3px]">
      <div className="h-[42px] bg-[#2e2e2e] flex items-center shrink-0">
        <Dark c="ml-[14px] w-[50px] gap-[2px] text-[#eee]"><S c="w-[26px] h-[26px]" sw={1.4}><rect x="1" y="3" width="20" height="8" rx="4" fill="currentColor" stroke="none" /><rect x="1" y="14" width="20" height="8" rx="4" fill="currentColor" stroke="none" /><circle cx="16" cy="7" r="2.4" fill="#333" stroke="none" /><circle cx="16" cy="18" r="2.4" fill="#333" stroke="none" /></S><Chev /></Dark>
        <Dark c="ml-[97px] w-[190px] !justify-start pl-[6px] !bg-[#1f1f1f] text-[#dcdcdc]"><Search className="w-[24px] h-[24px] -scale-x-100" strokeWidth={1.8} /></Dark>
        <Dark c="ml-auto mr-[15px] w-[31px]"><Chev /></Dark>
      </div>
      <div className="flex flex-1">
        <div className="w-[47px] bg-[#1b1b1b] shrink-0 flex flex-col">
          <Tab c="mt-[12px] text-[#d8d8d8]"><S sw={2}><path d="M6 2v9M3 13h6v9H3z" /><path d="M17 22V10M13 2v4l4 3 4-3V2" /></S></Tab>
          <Tab c="mt-[11px] text-[#cfcfcf]"><S sw={1.6}><rect x="1" y="6" width="22" height="16" rx="2" fill="currentColor" stroke="none" /><path d="M5 6V2h6v4" /><rect x="4" y="10" width="12" height="8" fill="#333" stroke="none" /></S></Tab>
          <Tab c="text-[#cfcfcf]"><S sw={1.6}><path d="M2 3h20v8H2z" fill="currentColor" stroke="none" /><rect x="6" y="9" width="12" height="13" fill="#1b1b1b" stroke="currentColor" /><path d="M8 19l4-5 4 5z" fill="currentColor" stroke="none" /></S></Tab>
          <Tab><ImgStack c="w-[24px] h-[24px] text-[#cfcfcf]" /></Tab>
          <Tab><SceneIc c="w-[24px] h-[24px] text-[#cfcfcf]" /></Tab>
          <Tab><Globe className="w-[24px] h-[24px] text-[#c45868]" strokeWidth={2.4} /></Tab>
          <Tab c="mt-[13px]"><CubeIc c="w-[24px] h-[24px] text-[#c98a45]" /></Tab>
          <Tab active><Wrench className="w-[24px] h-[24px] text-[#7ea4ee] -scale-x-100" fill="currentColor" strokeWidth={1.5} /></Tab>
          <Tab c="text-[#6b8fd0]"><S sw={1.4}><circle cx="4" cy="4" r="3.4" fill="currentColor" /><circle cx="20" cy="4" r="2.4" fill="currentColor" /><circle cx="4" cy="20" r="2.4" fill="currentColor" /><circle cx="20" cy="20" r="3.4" fill="currentColor" /><path d="M7 4h10M4 7v10M7 7l10 10" /></S></Tab>
          <Tab c="text-[#6b8fd0]"><S sw={1.6}><path d="M21 18a11 9 0 1 1 0-12" /><circle cx="11" cy="12" r="4.2" fill="currentColor" stroke="none" /><circle cx="20" cy="5" r="3" fill="currentColor" stroke="none" /></S></Tab>
          <Tab c="text-[#7da0e0]"><S sw={1.8}><path d="M3 15c0-4 14-13 18-11 2 4-6 18-12 18-4 0-6-3-6-7z" /><circle cx="10" cy="15" r="4" /><circle cx="10" cy="15" r="1.2" fill="currentColor" /><circle cx="18" cy="7" r="1" /></S></Tab>
          <Tab><MeshIc c="w-[24px] h-[24px] text-[#2bbf8f]" /></Tab>
          <Tab c="text-[#c45868]"><S sw={1}><circle cx="12" cy="12" r="11" fill="currentColor" stroke="none" /><path d="M12 3a9 9 0 0 1 9 9h-9zM12 12H3a9 9 0 0 0 9 9z" fill="#111" stroke="none" /></S></Tab>
          <Tab c="mt-[12px]">
            <svg viewBox="0 0 6 6" className="w-[24px] h-[24px]" shapeRendering="crispEdges">
              <rect width="6" height="6" fill="#c45868" />
              <path d="M1 0h1v1H1zM3 0h1v1H3zM5 0h1v1H5zM0 1h1v1H0zM2 1h1v1H2zM4 1h1v1H4zM1 2h1v1H1zM3 2h1v1H3zM5 2h1v1H5zM0 3h1v1H0zM2 3h1v1H2zM4 3h1v1H4zM1 4h1v1H1zM3 4h1v1H3zM5 4h1v1H5zM0 5h1v1H0zM2 5h1v1H2zM4 5h1v1H4z" fill="#1b1b1b" />
            </svg>
          </Tab>
        </div>
        <div className="flex-1 flex flex-col">
          <div className="h-[56px] flex items-center pl-[17px] text-[#dedede]">
            <CubeIc />
            <span className="ml-[14px] pt-[2px]">Cube</span>
            <RightChev c="ml-[28px] w-[12px] h-[18px] text-[#d0d0d0]" />
            <span className="ml-[16px]"><NodesIc /></span>
            <span className="ml-[13px] pt-[2px]">GeometryNodes</span>
            <span className="ml-auto mr-[18px]"><PinIc /></span>
          </div>
          <div className="ml-[14px] mr-[15px] mt-[16px] h-[31px] rounded-[6px] bg-[#222] border border-[#2a2a2a] flex items-center pl-[11px] pr-[4px] text-[#dedede]">Add Modifier<span className="ml-auto"><Chev /></span></div>
          <div className="ml-[14px] mr-[15px] mt-[17px] h-[181px] rounded-[8px] border border-[#4772b3] bg-[#3d3d3d] flex flex-col text-[#dedede]">
            <div className="flex items-center h-[31px] mt-[5px] pl-[12px]">
              <Chev c="text-[#bbb] w-[16px] h-[16px]" />
              <span className="ml-[7px]"><NodesIc /></span>
              <div className="ml-[20px] flex h-[31px] rounded-[6px] overflow-hidden">
                <div className="w-[108px] bg-[#1e1e1e] flex items-center pl-[10px] text-[#e0e0e0]">Geometr...</div>
                <div className="w-[33px] bg-[#545454] flex items-center justify-center text-[#e0e0e0]"><MeshIc c="w-[24px] h-[24px] text-[#e4e4e4]" /></div>
                <div className="w-[33px] bg-[#4772b3] flex items-center justify-center text-white"><S c="w-[24px] h-[24px]" sw={1.3}><rect x="3" y="3" width="18" height="18" /><rect x="1" y="1" width="4" height="4" fill="#4772b3" /><rect x="1" y="19" width="4" height="4" fill="#4772b3" /><rect x="19" y="19" width="4" height="4" fill="#4772b3" /><rect x="16" y="1" width="7" height="7" fill="currentColor" stroke="none" /></S></div>
                <div className="w-[33px] bg-[#4772b3] border-l border-[#3a5f98] flex items-center justify-center text-white"><Monitor className="w-[24px] h-[24px]" strokeWidth={2} /></div>
                <div className="w-[33px] bg-[#4772b3] border-l border-[#3a5f98] flex items-center justify-center text-white"><Camera className="w-[24px] h-[24px]" strokeWidth={2} /></div>
                <div className="w-[32px] bg-[#1e1e1e] flex items-center justify-center"><Chev c="w-[16px] h-[16px] text-[#e0e0e0]" /></div>
              </div>
              <span className="ml-[7px]"><XIc c="w-[22px] h-[22px] text-[#e0e0e0]" /></span>
              <div className="ml-[23px] grid grid-cols-4 gap-x-[2.3px] gap-y-[2px] w-[19px]">
                {[0, 1, 2, 3, 4, 5, 6, 7].map((i) => <div key={i} className="w-[3px] h-[3px] bg-[#bbb]" />)}
              </div>
            </div>
            <div className="mt-[18px] ml-[12px] flex h-[31px] w-[408px] rounded-[6px] overflow-hidden">
              <div className="w-[52px] bg-[#282828] flex items-center justify-center gap-[1px]"><TreeIc /><Chev /></div>
              <div className="w-[257px] bg-[#1e1e1e] flex items-center pl-[12px] pt-[1px]">Scatter</div>
              <div className="w-[33px] bg-[#545454] flex items-center justify-center"><ShieldIc /></div>
              <div className="w-[33px] bg-[#545454] border-l border-[#444] flex items-center justify-center"><CopyIc /></div>
              <div className="w-[33px] bg-[#545454] border-l border-[#444] flex items-center justify-center"><XIc /></div>
            </div>
            <div className="mt-[16px] h-[41px] flex items-center pl-[37px] text-[#d4d4d4]"><RightChev c="w-[10px] h-[16px] text-[#c8c8c8]" /><span className="ml-[10px]">Output Attributes</span></div>
            <div className="mt-[1px] h-[41px] flex items-center pl-[37px] text-[#d4d4d4]"><RightChev c="w-[10px] h-[16px] text-[#c8c8c8]" /><span className="ml-[10px]">Internal Dependencies</span></div>
          </div>
        </div>
      </div>
    </div>
  );
}

const Mouse = ({ btn }: { btn?: string }) => (
  <svg viewBox="0 0 18 26" className="w-[18px] h-[26px] shrink-0 text-[#bdbdbd]" fill="none" stroke="currentColor" strokeWidth="1.8"><rect x="1.5" y="1.5" width="15" height="23" rx="5" />{btn && <path d={btn} fill="currentColor" stroke="none" />}</svg>
);

export default function App() {
  return (
    <div className="w-[2560px] h-[1440px] flex flex-col overflow-hidden bg-[#181818] text-[17.3px] font-['DejaVu_Sans',sans-serif]">
      <div className="h-[42px] flex items-center shrink-0 text-[#e0e0e0]">
        <SiBlender className="ml-[16px] mr-[18px] w-[24px] h-[24px] text-white shrink-0" />
        <span className="w-[54px] pt-[2px]">File</span>
        <span className="w-[58px] pt-[2px]">Edit</span>
        <span className="w-[88px] pt-[2px]">Render</span>
        <span className="w-[92px] pt-[2px]">Window</span>
        <span className="w-[93px] pt-[2px]">Help</span>
        <div className="h-[33px] self-end flex items-center text-[#a8a8a8]">
          <span className="w-[90px]">Layout</span>
          <span className="w-[110px]">Modeling</span>
          <span className="w-[112px]">Sculpting</span>
          <span className="w-[122px]">UV Editing</span>
          <span className="w-[147px]">Texture Paint</span>
          <span className="w-[101px]">Shading</span>
          <span className="w-[120px]">Animation</span>
          <span className="w-[122px]">Rendering</span>
          <span className="w-[125px]">Compositing</span>
          <span className="w-[175px] h-[33px] rounded-t-[6px] bg-[#303030] text-[#ececec] flex items-center pl-[14px]">Geometry Nodes</span>
          <span className="ml-[17px] w-[100px]">Scripting</span>
          <Plus className="w-[20px] h-[20px] text-[#aaa]" strokeWidth={2} />
        </div>
        <div className="ml-[104px] flex w-[315px] h-[32px] rounded-[6px] overflow-hidden border border-[#2a2a2a]">
          <div className="w-[51px] bg-[#222] flex items-center justify-center gap-[1px]"><SceneIc /><Chev /></div>
          <div className="w-[197px] bg-[#1e1e1e] border-l border-[#333] flex items-center pl-[12px] justify-between pr-[6px]"><span className="pt-[2px]">Scene</span><PinIc /></div>
          <div className="w-[33px] bg-[#545454] flex items-center justify-center"><CopyIc /></div>
          <div className="w-[34px] bg-[#3c3c3c] flex items-center justify-center"><XIc c="w-[22px] h-[22px] text-[#777]" /></div>
        </div>
        <div className="ml-[9px] flex w-[314px] h-[32px] rounded-[6px] overflow-hidden border border-[#2a2a2a]">
          <div className="w-[51px] bg-[#222] flex items-center justify-center gap-[1px]"><ImgStack /><Chev /></div>
          <div className="w-[197px] bg-[#1e1e1e] border-l border-[#333] flex items-center pl-[12px] pt-[2px]">ViewLayer</div>
          <div className="w-[33px] bg-[#545454] flex items-center justify-center"><CopyIc /></div>
          <div className="w-[33px] bg-[#3c3c3c] flex items-center justify-center"><XIc c="w-[22px] h-[22px] text-[#777]" /></div>
        </div>
      </div>
      <div className="flex h-[1364px] shrink-0">
        <div className="w-[732px] shrink-0 flex flex-col text-[17.3px]">
          <Viewport />
          <Spreadsheet />
        </div>
        <NodeEditor />
        <div className="w-[511px] ml-[3px] shrink-0 flex flex-col">
          <Outliner />
          <Properties />
        </div>
      </div>
      <div className="h-[34px] flex items-center text-[#a2a2a2] shrink-0 border-t border-[#222]">
        <span className="ml-[20px]"><Mouse btn="M3 3h5v9H3z" /></span>
        <span className="ml-[17px] w-[317px]">Select</span>
        <Mouse btn="M7 5h4v7H7z" />
        <span className="ml-[17px] w-[318px]">Pan View</span>
        <Mouse btn="M10 3h5v9h-5z" />
        <span className="ml-[16px]">Node Context Menu</span>
        <span className="ml-auto mr-[13px] text-[#a8a8a8]">3.3.0 Alpha</span>
      </div>
    </div>
  );
}
